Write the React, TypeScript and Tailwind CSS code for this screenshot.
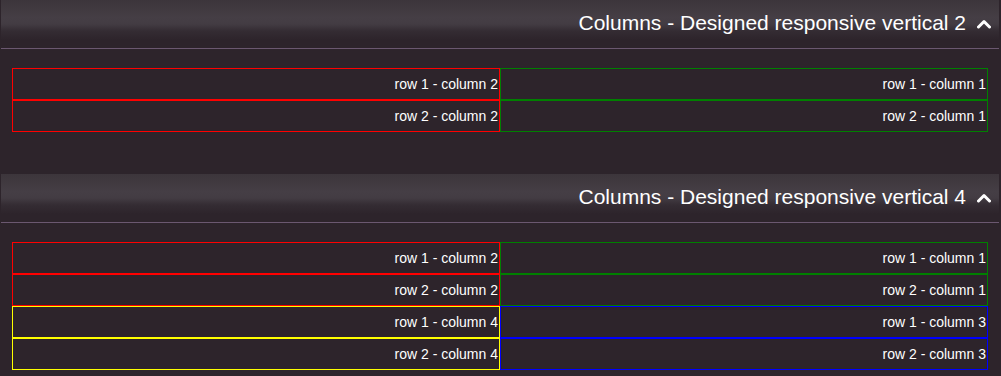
import React from "react";

type Cell = { label: string; color: string };

const Chevron = () => (
  <svg width="14" height="11" viewBox="0 0 14 11" className="shrink-0">
    <path d="M1.5 9 L7 3.5 L12.5 9" fill="none" stroke="#ffffff" strokeWidth="3" strokeLinecap="round" strokeLinejoin="round" />
  </svg>
);

const Header = ({ title }: { title: string }) => (
  <div className="h-[49px] border-b border-[#6b5870] bg-[linear-gradient(to_bottom,#3c353b_0px,#453e45_18px,#433c43_24px,#342c33_31px,#2d242b_40px)] flex items-start justify-end pt-[11px] pr-[8px]">
    <span className="text-[21px] leading-[24px] text-white">{title}</span>
    <span className="ml-[11px] mt-[7px]">
      <Chevron />
    </span>
  </div>
);

const CellBox = ({ label, color }: Cell) => (
  <div
    className="h-[32px] border text-right pr-px text-[14px] leading-[30px] text-white"
    style={{ borderColor: color }}
  >
    {label}
  </div>
);

const Table = ({ rows }: { rows: Cell[][] }) => (
  <div className="mx-[11px] mt-[19px] grid grid-cols-2">
    {rows.map((r, i) => (
      <React.Fragment key={i}>
        {r.map((c, j) => (
          <CellBox key={j} label={c.label} color={c.color} />
        ))}
      </React.Fragment>
    ))}
  </div>
);

export default function App() {
  const red = "#ff0000";
  const green = "#008000";
  const yellow = "#ffff00";
  const blue = "#0000ff";
  const t1: Cell[][] = [
    [
      { label: "row 1 - column 2", color: red },
      { label: "row 1 - column 1", color: green },
    ],
    [
      { label: "row 2 - column 2", color: red },
      { label: "row 2 - column 1", color: green },
    ],
  ];
  const t2: Cell[][] = [
    ...t1,
    [
      { label: "row 1 - column 4", color: yellow },
      { label: "row 1 - column 3", color: blue },
    ],
    [
      { label: "row 2 - column 4", color: yellow },
      { label: "row 2 - column 3", color: blue },
    ],
  ];
  return (
    <div
      className="w-[1001px] h-[376px] overflow-hidden bg-[#2d242b] pl-px pr-[2px]"
      style={{ fontFamily: '"Liberation Sans", Arial, sans-serif' }}
    >
      <Header title="Columns - Designed responsive vertical 2" />
      <Table rows={t1} />
      <div className="h-[42px]" />
      <Header title="Columns - Designed responsive vertical 4" />
      <Table rows={t2} />
    </div>
  );
}
